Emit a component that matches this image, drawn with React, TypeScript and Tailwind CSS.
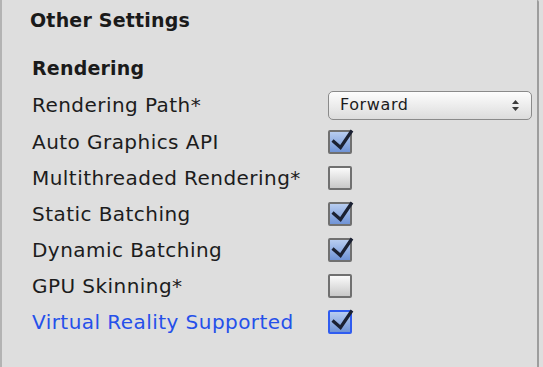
import React from "react";

const font = { fontFamily: '"DejaVu Sans", "Liberation Sans", sans-serif' };

function Checkbox({ checked, focused }: { checked: boolean; focused?: boolean }) {
  return (
    <div className="relative w-[24px] h-[24px] shrink-0">
      <div
        className={
          "w-[24px] h-[24px] rounded-[2px] border-2 " +
          (focused ? "border-[#2f5cf0] " : "border-[#707070] ") +
          (checked
            ? "bg-gradient-to-b from-[#b8cdf0] to-[#6f93d6]"
            : "bg-gradient-to-b from-[#fbfbfb] to-[#c9c9c9]")
        }
      />
      {checked && (
        <svg
          className="absolute left-0 top-0 overflow-visible"
          width="24"
          height="24"
          viewBox="0 0 24 24"
        >
          <path
            d="M4.5 10.5 L12.5 17.5 L24 0.5"
            fill="none"
            stroke="#1b2132"
            strokeWidth="3.2"
            strokeLinejoin="miter"
          />
        </svg>
      )}
    </div>
  );
}

function Row({
  label,
  children,
  blue,
  h = "h-[36px]",
}: {
  label: string;
  children: React.ReactNode;
  blue?: boolean;
  h?: string;
}) {
  return (
    <div className={"flex items-center " + h}>
      <div
        className={
          "w-[326px] shrink-0 pl-[30px] text-[20px] tracking-[0.45px] whitespace-nowrap " +
          (blue ? "text-[#2550ea]" : "text-[#1c1c1c]")
        }
      >
        {label}
      </div>
      {children}
    </div>
  );
}

export default function App() {
  return (
    <div className="w-[543px] h-[367px] bg-[#dedede] flex" style={font}>
      <div className="w-[539px] h-[367px] border-l-2 border-l-[#b3b3b3] border-r-2 border-r-[#9d9d9d] rounded-tr-[2px] flex flex-col">
        <div className="h-[41px] flex items-center pl-[28px] text-[19px] font-bold text-[#1a1a1a] tracking-[0.2px]">
          Other Settings
        </div>
        <div className="mt-[9px] h-[36px] flex items-center pl-[30px] text-[19px] font-bold text-[#1a1a1a] tracking-[0.2px]">
          Rendering
        </div>
        <Row label="Rendering Path*" h="h-[38px]">
          <div className="w-[204px] h-[29px] shrink-0 rounded-[5px] border border-[#8a8a8a] bg-gradient-to-b from-[#fdfdfd] to-[#dcdcdc] flex items-center justify-between pl-[11px] pr-[12px]">
            <span className="text-[16px] tracking-[0.6px] text-[#1c1c1c]">Forward</span>
            <svg width="7" height="11" viewBox="0 0 7 11">
              <path d="M3.5 0 L7 4 L0 4 Z" fill="#3a3a3a" />
              <path d="M3.5 11 L7 7 L0 7 Z" fill="#3a3a3a" />
            </svg>
          </div>
        </Row>
        <Row label="Auto Graphics API">
          <Checkbox checked />
        </Row>
        <Row label="Multithreaded Rendering*">
          <Checkbox checked={false} />
        </Row>
        <Row label="Static Batching">
          <Checkbox checked />
        </Row>
        <Row label="Dynamic Batching">
          <Checkbox checked />
        </Row>
        <Row label="GPU Skinning*">
          <Checkbox checked={false} />
        </Row>
        <Row label="Virtual Reality Supported" blue>
          <Checkbox checked focused />
        </Row>
      </div>
    </div>
  );
}
